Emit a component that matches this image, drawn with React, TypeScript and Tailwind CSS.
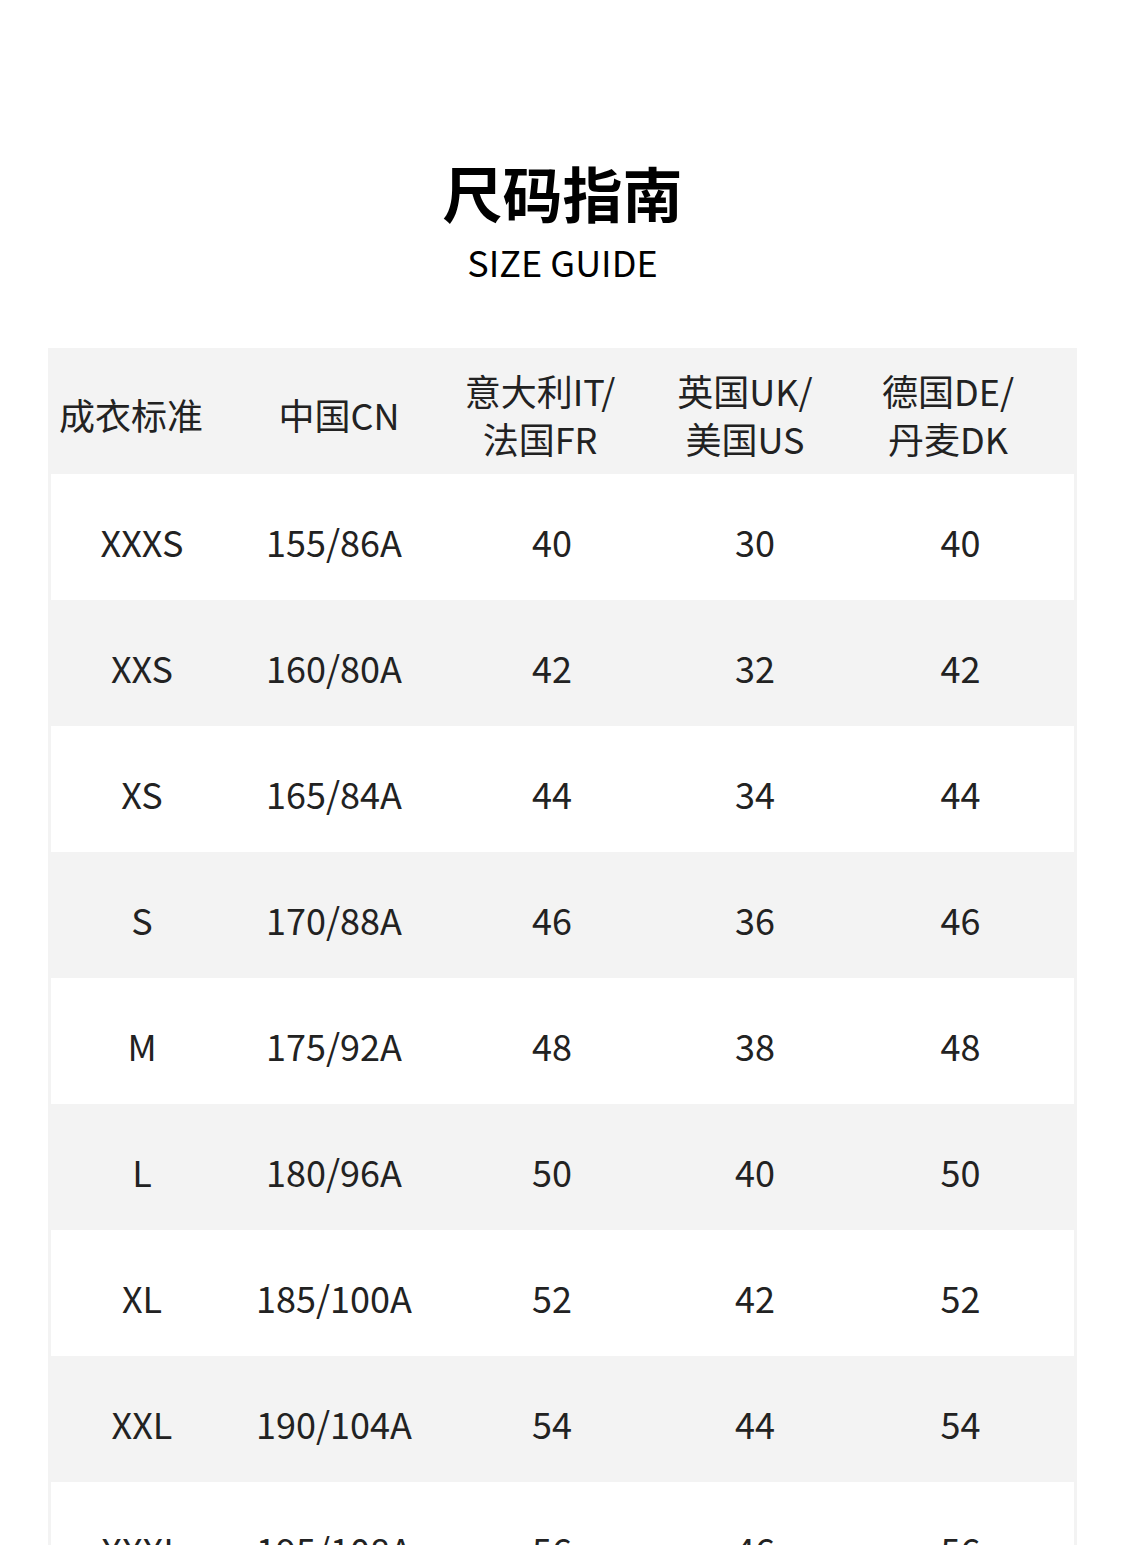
const font = { fontFamily: '"Noto Sans CJK SC", "Noto Sans", sans-serif' };

const headers: string[][] = [
  ['成衣标准'],
  ['中国CN'],
  ['意大利IT/', '法国FR'],
  ['英国UK/', '美国US'],
  ['德国DE/', '丹麦DK'],
];

const rows: string[][] = [
  ['XXXS', '155/86A', '40', '30', '40'],
  ['XXS', '160/80A', '42', '32', '42'],
  ['XS', '165/84A', '44', '34', '44'],
  ['S', '170/88A', '46', '36', '46'],
  ['M', '175/92A', '48', '38', '48'],
  ['L', '180/96A', '50', '40', '50'],
  ['XL', '185/100A', '52', '42', '52'],
  ['XXL', '190/104A', '54', '44', '54'],
  ['XXXL', '195/108A', '56', '46', '56'],
];

// header labels sit a little left of the column data
const headPad = ['pr-[28px]', 'pl-[8px]', 'pr-[24px]', 'pr-[20px]', 'pr-[15px]'];
const cellPad = ['pr-[6px]', 'pr-[2px]', '', '', 'pl-[10px]'];

export default function App() {
  return (
    <div className="min-h-screen bg-white text-[#222]" style={font}>
      <div className="pt-[156px] flex flex-col items-center">
        <h1 className="text-[60px] leading-[72px] font-bold text-black">尺码指南</h1>
        <p className="mt-[13px] text-[36px] leading-[40px] text-black">SIZE GUIDE</p>
      </div>

      <div className="mx-12 mt-[67px] bg-[#f3f3f3] px-[3px]">
        <div className="grid grid-cols-[188px_192px_242px_164px_237px] h-[126px] items-center">
          {headers.map((h, i) => (
            <div key={i} className={`flex justify-center text-center text-[36px] leading-[48px] pt-[6px] ${headPad[i]}`}>
              <span>
                {h.map((line, j) => (
                  <span key={j} className="block">{line}</span>
                ))}
              </span>
            </div>
          ))}
        </div>

        {rows.map((r, ri) => (
          <div
            key={ri}
            className={`grid grid-cols-[188px_192px_242px_164px_237px] h-[126px] items-center ${ri % 2 === 0 ? 'bg-white' : ''}`}
          >
            {r.map((c, ci) => (
              <div key={ci} className={`text-center text-[36px] leading-[48px] pt-[8px] ${cellPad[ci]}`}>
                {c}
              </div>
            ))}
          </div>
        ))}
      </div>
    </div>
  );
}
